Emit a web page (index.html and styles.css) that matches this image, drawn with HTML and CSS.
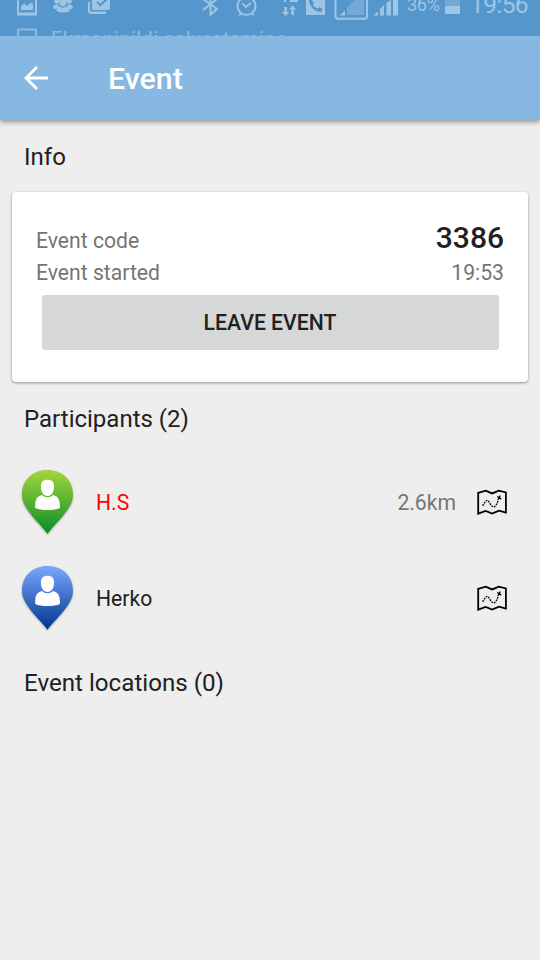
FILE: index.html
```html
<!DOCTYPE html>
<html lang="en">
<head>
<meta charset="utf-8">
<title>Event</title>
<link rel="stylesheet" href="styles.css">
</head>
<body>
<svg class="defs" width="0" height="0" aria-hidden="true">
  <defs>
    <linearGradient id="green" x1="0" y1="0" x2="0" y2="1"><stop offset="0" stop-color="#a4d63c"/><stop offset="1" stop-color="#088c26"/></linearGradient>
    <linearGradient id="blue" x1="0" y1="0" x2="0" y2="1"><stop offset="0" stop-color="#7ba8ff"/><stop offset="1" stop-color="#00348d"/></linearGradient>
    <symbol id="person" viewBox="0 0 54 68">
      <path d="M26.5 11.8C31 11.8 33.2 14.5 33.1 18.5C33 23.5 31 28 26.5 28C22 28 20 23.5 19.9 18.5C19.8 14.5 22 11.8 26.5 11.8Z"/>
      <path d="M14.2 40C14 31.5 15.5 28.5 21 27C24 30 29 30 32 27C37.5 28.5 39 31.5 38.9 40C33 42.8 20 42.8 14.2 40Z"/>
    </symbol>
    <symbol id="map" viewBox="0 0 32 28">
      <path d="M2.2 4.8L9.6 2.6L16.2 5.4L22.8 2.6L29.9 4.4V24.6L23 22.7L16.2 25.6L9.6 23L2.2 25.7Z" fill="none" stroke="#000" stroke-width="1.8"/>
      <path d="M6.6 17.8C9 14 10 12 11.8 12.6C14 14 14.5 18.8 17.6 18.8C20.3 18.6 21.3 14.5 22.5 12" fill="none" stroke="#000" stroke-width="1.3" stroke-dasharray="1.8 1"/>
      <path d="M21.3 8.5L25.2 11.2M24.3 7.5L22 12" stroke="#000" stroke-width="1.4"/>
    </symbol>
  </defs>
</svg>
<div class="status">
  <div class="status-row">
    <svg class="left-icons" width="125" height="16" viewBox="0 0 125 16" fill="#9fc5e5">
      <path fill-rule="evenodd" d="M17 0H37V15.5H17ZM19 0V12.5H35V0Z"/>
      <path d="M21 10V6L24.5 3.5L27 6L31 2.5L33 4V10Z"/>
      <circle cx="57" cy="1" r="2.8"/><circle cx="69" cy="1" r="2.8"/>
      <path d="M53 8C53 5 55 4.5 58 4.5L59 6L56 9.5ZM68 4.5C71 4.5 73 5 73 8L70 9.5L67 6Z"/>
      <path d="M56.5 11C56.5 8 58 7 60 6.5Q63 9 66 6.5C68.5 7 69.7 8 69.7 11C66 13 60 13 56.5 11Z"/>
      <ellipse cx="63" cy="1.8" rx="3.4" ry="4.6"/>
      <path d="M88 2H90V11.5H106V14H91Q88 14 88 11Z"/>
      <path d="M92 0H110V8Q110 10 108 10H94Q92 10 92 8Z"/>
      <path d="M97 2L100.3 5.2L107 -1" fill="none" stroke="#5597cd" stroke-width="2"/>
    </svg>
    <svg class="right-icons" width="200" height="21" viewBox="200 0 200 21" fill="#9fc5e5">
      <path d="M203 10L217 -1M203 -1L217 9L210.5 14.5V0" fill="none" stroke="#9fc5e5" stroke-width="2"/>
      <circle cx="246.5" cy="6" r="9" fill="none" stroke="#9fc5e5" stroke-width="2"/>
      <path d="M242.5 3.5L246 7L251 3M241 13L239.5 15.5M252 13L253.5 15.5" fill="none" stroke="#9fc5e5" stroke-width="1.8"/>
      <path d="M284 0H286V2H284ZM290 0H298V2H290Z"/>
      <path d="M284.3 7H287V12H289.3L285.6 16L282 12H284.3ZM291.3 15H294V9.5H296.3L292.6 5.5L289 9.5H291.3Z"/>
      <path d="M306 0H325V15H306Z"/>
      <path d="M309 0H312L314 3L313 5Q315 8 317.5 8.5L319.5 7L322.5 9L321.5 12C315 12.5 309 6 309 0Z" fill="#5597cd"/>
      <path d="M335.5 0V16Q335.5 18.8 338 18.8H364.5Q367 18.8 367 16V0" fill="none" stroke="#9fc5e5" stroke-width="2"/>
      <path d="M347 15V8L355 0H364V15Z" fill="#72a9d7"/>
      <path d="M340 15.5L345 10.5V15.5ZM373 15.5L378 11.5V15.5ZM380 15.5V9L384 5V15.5ZM386.5 15.5V3L391 0V15.5ZM393 0H398V15.5H393Z"/>
    </svg>
    <span class="percent">36%</span>
    <svg class="battery" width="15" height="14" viewBox="0 0 15 14"><path d="M0 0H15V6H0Z" fill="#72a9d7"/><path d="M0 6H15V14H0Z" fill="#9fc5e5"/></svg>
    <span class="clock">19:56</span>
  </div>
  <div class="ticker">
    <svg width="20" height="20" viewBox="0 0 20 20"><path d="M1 20V1.5H19V20" fill="none" stroke="#8fbbe1" stroke-width="2"/></svg>
    <span class="ticker-text">Ekraanipildi salvestamine...</span>
  </div>
</div>
<header class="appbar">
  <svg width="24" height="24" viewBox="0 0 24 24"><path d="M24 12H2M13 1L2 12L13 23" fill="none" stroke="#fff" stroke-width="2.8"/></svg>
  <h1>Event</h1>
</header>
<main>
  <h2>Info</h2>
  <section class="card">
    <div class="row code"><span>Event code</span><strong>3386</strong></div>
    <div class="row"><span>Event started</span><span>19:53</span></div>
    <button>LEAVE EVENT</button>
  </section>
  <h2 class="people">Participants (2)</h2>
  <ul>
    <li>
      <svg class="pin" width="54" height="68" viewBox="0 0 54 68"><path d="M26.5 2C12 2 1 11.5 1 27C1 41 18 54 26.5 65.8C35 54 52 41 52 27C52 11.5 41 2 26.5 2Z" fill="url(#green)"/><use href="#person" fill="#fff"/></svg>
      <span class="name away">H.S</span><span class="distance">2.6km</span>
      <svg class="map" width="32" height="28"><use href="#map"/></svg>
    </li>
    <li>
      <svg class="pin" width="54" height="68" viewBox="0 0 54 68"><path d="M26.5 2C12 2 1 11.5 1 27C1 41 18 54 26.5 65.8C35 54 52 41 52 27C52 11.5 41 2 26.5 2Z" fill="url(#blue)"/><use href="#person" fill="#fff"/></svg>
      <span class="name">Herko</span>
      <svg class="map" width="32" height="28"><use href="#map"/></svg>
    </li>
  </ul>
  <h2 class="locations">Event locations (0)</h2>
</main>
</body>
</html>
```
FILE: styles.css
```css
* { box-sizing: border-box; }
body { margin: 0; width: 540px; height: 960px; overflow: hidden; background: #eee; color: #212121; font-family: Roboto, sans-serif; }
svg { display: block; flex: none; }
.defs { position: absolute; }
.status { position: relative; z-index: 1; height: 36px; overflow: hidden; background: #5597cd; color: #9fc5e5; }
.status-row { display: flex; align-items: flex-start; height: 28px; }
.right-icons { margin-left: 75px; }
.percent { width: 33px; margin: -6px 0 0 7px; font-size: 18px; line-height: 22px; letter-spacing: -0.3px; white-space: nowrap; }
.battery { margin-left: 5px; }
.clock { margin: -9px 0 0 10px; font-size: 24.5px; line-height: 28px; letter-spacing: -0.6px; }
.ticker { display: flex; align-items: flex-start; padding-left: 17px; color: #8fbbe1; }
.ticker-text { margin: -2px 0 0 14px; font-size: 20px; line-height: 26px; letter-spacing: 0.4px; white-space: nowrap; }
.appbar { position: relative; display: flex; align-items: center; height: 84px; padding: 0 24px; gap: 60px; background: #86b8e1; color: #fff; box-shadow: 0 2px 5px rgba(0, 0, 0, .4); }
h1 { margin: 2px 0 0; font-size: 30.3px; line-height: 36px; font-weight: 500; }
h2 { margin: 0; padding-left: 24px; font-size: 24px; line-height: 28px; font-weight: 400; }
main { padding-top: 23px; }
.card { height: 190px; margin: 21px 12px 0; padding: 28px 24px 0; border-radius: 4px; background: #fff; box-shadow: 0 1px 3px rgba(0, 0, 0, .4); }
.row { display: flex; justify-content: space-between; align-items: baseline; height: 28px; color: #757575; font-size: 21.15px; line-height: 28px; }
.code { height: 39px; line-height: 36px; }
.row strong { font-size: 30px; line-height: 36px; font-weight: 500; color: #212121; }
button { display: block; width: 457px; height: 55px; margin: 8px 0 0 5.5px; border: 0; border-radius: 3px; background: #d6d8d7; color: #212121; font: 500 21.2px/28px Roboto, sans-serif; padding: 0; }
.people { margin-top: 23px; }
ul { list-style: none; margin: 21px 0 0; padding: 0; }
li { display: flex; align-items: center; height: 96px; padding: 0 32px 0 21px; }
.pin { filter: drop-shadow(0 1px 1px rgba(0, 0, 0, .3)); }
.name { margin: 2px 0 0 21px; flex: 1; font-size: 21.15px; line-height: 28px; }
.away { color: #f00; }
.distance { margin: 2px 20px 0 0; color: #757575; font-size: 21.15px; line-height: 28px; }
.locations { margin-top: 23px; font-size: 24.15px; }
```
